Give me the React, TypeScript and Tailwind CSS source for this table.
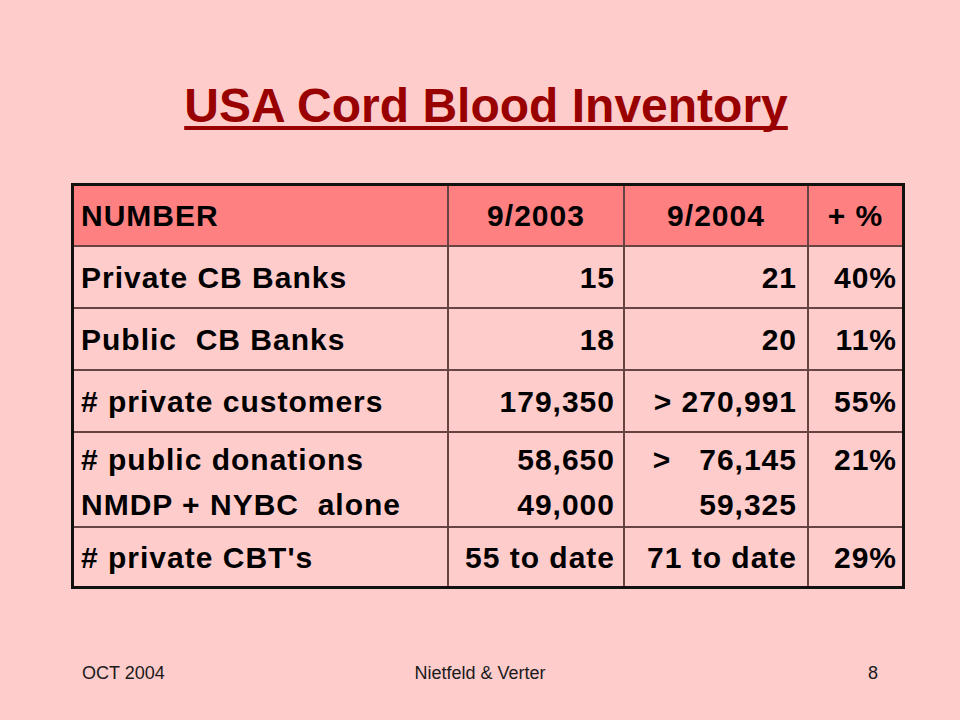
const ROWS = [
  { label: 'Private CB Banks', a: '15', b: '21', pct: '40%' },
  { label: 'Public  CB Banks', a: '18', b: '20', pct: '11%' },
  { label: '# private customers', a: '179,350', b: '> 270,991', pct: '55%' },
];

const cell = 'bg-[#ffcccc] flex items-center whitespace-pre';

export default function App() {
  return (
    <div className="w-[960px] h-[720px] bg-[#ffcccc] flex flex-col font-['Liberation_Sans',Arial,sans-serif] text-black">
      {/* Title */}
      <div className="pt-[82px] pl-[12px] text-center">
        <h1 className="text-[48px] leading-[48px] font-bold text-[#990000] underline decoration-[4px] underline-offset-[4px] [text-decoration-skip-ink:none]">
          USA Cord Blood Inventory
        </h1>
      </div>

      {/* Table */}
      <div className="ml-[71px] mt-[53px] w-[834px] border-[3px] border-[#111] bg-[#664444] grid grid-cols-[373px_174px_182px_93px] grid-rows-[59px_60px_60px_60px_93px_58px] gap-[2px] text-[30px] font-bold tracking-[1px]">
        <div className="bg-[#ff8080] flex items-center pl-[7px]">NUMBER</div>
        <div className="bg-[#ff8080] flex items-center justify-center">9/2003</div>
        <div className="bg-[#ff8080] flex items-center justify-center">9/2004</div>
        <div className="bg-[#ff8080] flex items-center justify-center whitespace-pre">+ %</div>

        {ROWS.map((r) => (
          <>
            <div key={r.label} className={`${cell} pl-[7px]`}>{r.label}</div>
            <div className={`${cell} justify-end pr-[8px]`}>{r.a}</div>
            <div className={`${cell} justify-end pr-[10px]`}>{r.b}</div>
            <div className={`${cell} justify-end pr-[5px]`}>{r.pct}</div>
          </>
        ))}

        {/* two-line row */}
        <div className="bg-[#ffcccc] flex flex-col pt-[4px] pl-[7px] leading-[45px] whitespace-pre">
          <span># public donations</span>
          <span>NMDP + NYBC  alone</span>
        </div>
        <div className="bg-[#ffcccc] flex flex-col items-end pt-[4px] pr-[8px] leading-[45px]">
          <span>58,650</span>
          <span>49,000</span>
        </div>
        <div className="bg-[#ffcccc] flex flex-col items-end pt-[4px] pr-[10px] leading-[45px] whitespace-pre">
          <span>{'>   76,145'}</span>
          <span>59,325</span>
        </div>
        <div className="bg-[#ffcccc] flex flex-col items-end pt-[4px] pr-[5px] leading-[45px]">
          <span>21%</span>
        </div>

        <div className={`${cell} pl-[7px]`}># private CBT's</div>
        <div className={`${cell} justify-end pr-[8px]`}>55 to date</div>
        <div className={`${cell} justify-end pr-[10px]`}>71 to date</div>
        <div className={`${cell} justify-end pr-[5px]`}>29%</div>
      </div>

      {/* Footer */}
      <div className="mt-auto pb-[37px] px-[82px] grid grid-cols-3 text-[18px] leading-[20px] text-[#1a1a1a]">
        <span className="text-left">OCT 2004</span>
        <span className="text-center">Nietfeld &amp; Verter</span>
        <span className="text-right">8</span>
      </div>
    </div>
  );
}
